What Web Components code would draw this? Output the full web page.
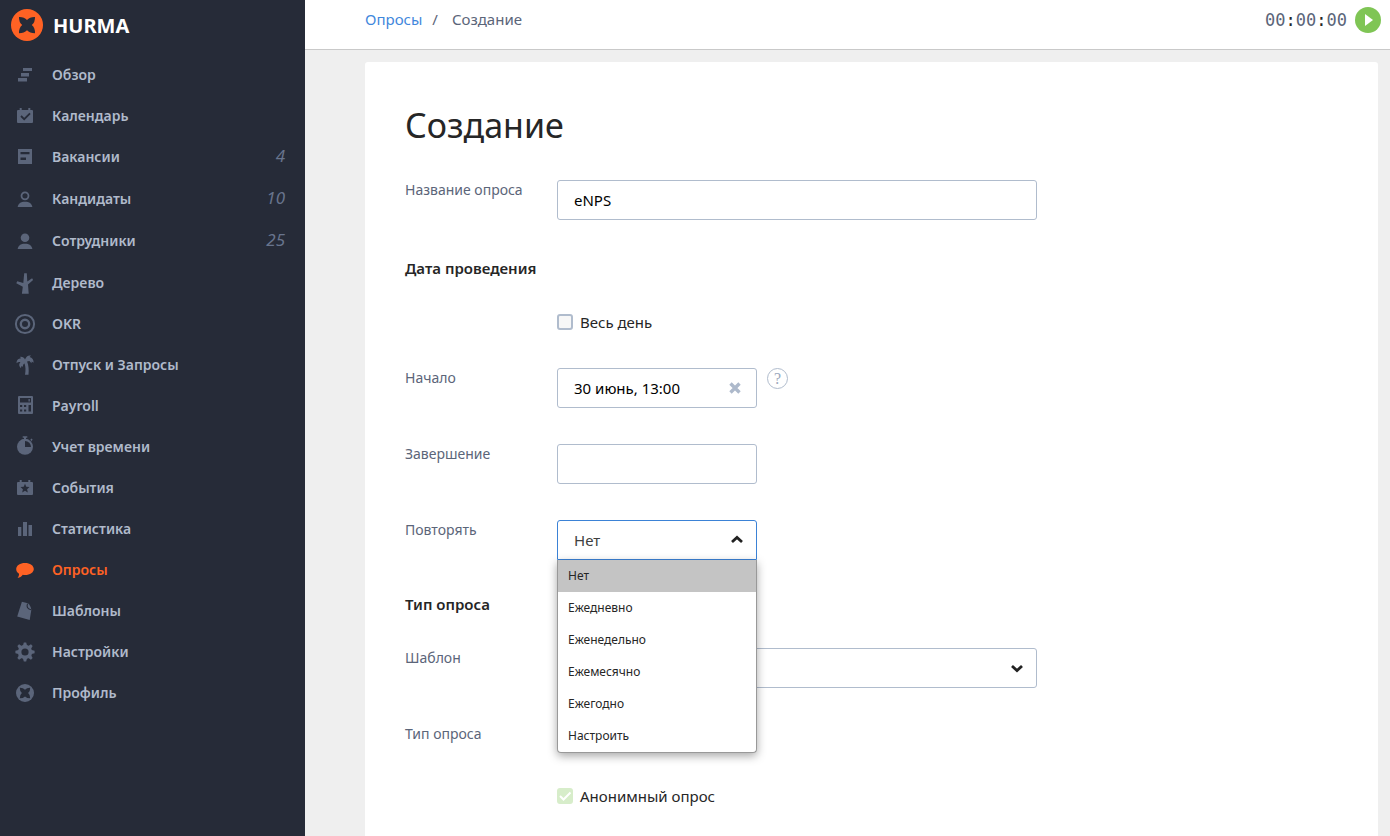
<!DOCTYPE html>
<html lang="ru">
<head>
<meta charset="utf-8">
<title>HURMA — Создание опроса</title>
<style>
  html, body { margin: 0; min-height: 100%; }
  body { background: #efefef; color: #262626; font-family: "Noto Sans", "Open Sans", sans-serif; font-size: 15px; overflow-x: hidden; }
</style>
</head>
<body>
<app-shell>
  <side-nav slot="nav">
    <nav-item icon="overview">Обзор</nav-item>
    <nav-item icon="calendar">Календарь</nav-item>
    <nav-item icon="vacancies" count="4">Вакансии</nav-item>
    <nav-item icon="candidates" count="10">Кандидаты</nav-item>
    <nav-item icon="employees" count="25">Сотрудники</nav-item>
    <nav-item icon="tree">Дерево</nav-item>
    <nav-item icon="okr">OKR</nav-item>
    <nav-item icon="palm">Отпуск и Запросы</nav-item>
    <nav-item icon="payroll">Payroll</nav-item>
    <nav-item icon="time">Учет времени</nav-item>
    <nav-item icon="events">События</nav-item>
    <nav-item icon="stats">Статистика</nav-item>
    <nav-item icon="polls" active>Опросы</nav-item>
    <nav-item icon="templates">Шаблоны</nav-item>
    <nav-item icon="settings">Настройки</nav-item>
    <nav-item icon="profile">Профиль</nav-item>
  </side-nav>
  <top-bar slot="bar"></top-bar>
  <survey-panel heading="Создание">
    <text-field class="first" label="Название опроса" value="eNPS"></text-field>
    <section-title>Дата проведения</section-title>
    <check-field>Весь день</check-field>
    <text-field label="Начало" value="30 июнь, 13:00" narrow clearable help></text-field>
    <text-field label="Завершение" narrow></text-field>
    <select-field label="Повторять" narrow open options="Нет,Ежедневно,Еженедельно,Ежемесячно,Ежегодно,Настроить"></select-field>
    <section-title>Тип опроса</section-title>
    <select-field label="Шаблон"></select-field>
    <plain-row>Тип опроса</plain-row>
    <check-field checked disabled>Анонимный опрос</check-field>
  </survey-panel>
</app-shell>

<script>
const define = (name, render) => customElements.define(name, class extends HTMLElement {
  constructor() { super(); this.attachShadow({ mode: 'open' }); }
  connectedCallback() { this.shadowRoot.innerHTML = render(this); }
});

const MARK = 'M8 8Q13.200 7.800 16 11Q18.800 7.800 24 8Q24.200 13.200 20.800 16Q24.200 18.800 24 24.200Q18.800 24.200 16 21.200Q13.200 24.200 8 24.200Q7.800 18.800 11.200 16Q7.800 13.200 8 8Z';
const BG = '#262b38';
const ICONS = {
  overview: '<path d="M10 5h9v3h-9zM8 10h8v3.5H8zM5 15h9v3.5H5z"/>',
  calendar: `<path d="M6.7 4h2v2h6.6V4h2v2H19a1 1 0 0 1 1 1v11a1 1 0 0 1-1 1H5a1 1 0 0 1-1-1V7a1 1 0 0 1 1-1h1.7z"/><path d="M8 12l3.2 3.2L17 9.4" fill="none" stroke="${BG}" stroke-width="1.8"/>`,
  vacancies: `<path d="M5 5h14v15H5z"/><path d="M7.5 8h9v2.3h-9zM7.5 13.6H13V16H7.5z" fill="${BG}"/>`,
  candidates: '<circle cx="12" cy="9.8" r="3.5" fill="none" stroke="currentColor" stroke-width="1.8"/><path d="M4.7 21c.4-3.4 3-5.3 7.3-5.3s6.9 1.900 7.3 5.3z"/>',
  employees: '<circle cx="12" cy="9.8" r="4.3"/><path d="M4.7 21c.4-3.4 3-5.3 7.3-5.3s6.9 1.900 7.3 5.3z"/>',
  tree: '<path d="M11.2 2.3h2.600l.5 8.3 4.800-3.400 1 1.700-5.100 4.700.7 9.100H8.900l.9-7-6.500-3.400.9-2.100 6.100 1.900z"/>',
  okr: '<g fill="none" stroke="currentColor"><circle cx="12" cy="12" r="9.1" stroke-width="2"/><circle cx="12" cy="12" r="4.2" stroke-width="2.4"/></g>',
  palm: '<path d="M12 6.500C13 3.500 15.500 1.800 18 2.600L16.600 4c2.600.4 4.200 2.800 4 5.800l-1.900-1.400-.2 1.800-2.100-2.300c-1 .1-1.700.3-2.300.6 1.600 3.700 1.900 8.300 1.400 13.200h-3.500c.8-4.500.7-8-.5-11.300-1.200.7-1.700 1.800-1.500 3.400l-1.500-.8-.6 2.200C5.600 12.800 5.800 10.900 7.400 9.200 5.800 8.800 4.800 9.200 3.600 10.300 3.500 6.900 5.600 5.600 7.800 5.600L7.200 3.800C9.300 3.500 11.200 4.500 12 6.500z"/>',
  payroll: `<path d="M6 2h13a1 1 0 0 1 1 1v16a1 1 0 0 1-1 1H6a1 1 0 0 1-1-1V3a1 1 0 0 1 1-1z"/><path d="M7 4h11v4.600H7zM7 11h2.200v2H7zM11 11h2.200v2H11zM7 15.600h2.200v2H7zM11 15.600h2.200v2H11zM15.500 11H18v6.600h-2.500z" fill="${BG}"/><path d="M15.500 5h1.300v2.600h-1.300z"/>`,
  time: `<circle cx="12" cy="11.8" r="8"/><path d="M9.700 1.200h4.600v1.600H13V5h-2V2.800H9.700zM17.400 4.600l1.100-1.100 1.200 1.200-1.600 1.600z"/><path d="M12 6v6h6a6 6 0 0 0-6-6z" fill="${BG}"/>`,
  events: `<path d="M6.700 4h2v2h6.600V4h2v2H19a1 1 0 0 1 1 1v11a1 1 0 0 1-1 1H5a1 1 0 0 1-1-1V7a1 1 0 0 1 1-1h1.700z"/><path d="M12 7.800l1.300 3 3.200.3-2.400 2.200.7 3.200-2.800-1.700-2.800 1.700.7-3.200-2.400-2.200 3.200-.3z" fill="${BG}"/>`,
  stats: '<path d="M5 10h3.300v9H5zM10 5h4v14h-4zM15.500 8H19v11h-3.500z"/>',
  polls: '<path d="M12 5c5 0 8.800 2.600 8.800 6s-3.800 6-8.800 6c-.8 0-1.500 0-2.200-.2C8.500 18.600 6.800 19.700 4.600 20c1-1.200 1.500-2.500 1.400-4.200-1.800-1.200-2.800-2.900-2.800-4.800C3.200 7.600 7 5 12 5z"/>',
  templates: `<path d="M8.900 2.700l6 1.600c1.900 1.600 3.200 4 3.400 6.700L16.700 21 4.200 17.600z"/><path d="M14.500 4.600c-1 3-.3 5.200 3.500 6.200" fill="none" stroke="${BG}" stroke-width="1.1"/>`,
  settings: `<g><circle cx="12" cy="12" r="7.200"/>${[0, 45, 90, 135].map(a => `<path d="M10.800 2.400h2.400l.8 3v13.200l-.8 3h-2.400l-.8-3V5.400z" transform="rotate(${a} 12 12)"/>`).join('')}<circle cx="12" cy="12" r="3.600" fill="${BG}"/></g>`,
  profile: `<circle cx="12" cy="12" r="9"/><g transform="translate(1.6 1.600) scale(.65)"><path d="${MARK}" fill="${BG}"/></g>`
};

define('app-shell', () => `
  <style>
    :host { display: grid; grid-template-columns: 305px minmax(0, 1fr); min-height: 100vh; }
    .content { display: flex; flex-direction: column; min-width: 0; }
    main { flex: 1; display: flex; flex-direction: column; padding: 12px 12px 0 60px; }
  </style>
  <slot name="nav"></slot>
  <div class="content"><slot name="bar"></slot><main><slot></slot></main></div>`);

define('side-nav', () => `
  <style>
    :host { display: block; background: ${BG}; }
    .brand { display: flex; align-items: center; gap: 10px; height: 50px; padding-left: 11px; margin-bottom: 4px; color: #fff; text-decoration: none; font-size: 20px; font-weight: 700; }
    svg { display: block; }
    nav { display: flex; flex-direction: column; }
  </style>
  <a class="brand" href="#"><svg width="32" height="32" viewBox="0 0 32 32" aria-hidden="true"><circle cx="16" cy="16" r="16" fill="#ff6224"/><path d="${MARK}" fill="${BG}"/></svg><span>HURMA</span></a>
  <nav><slot></slot></nav>`);

define('nav-item', el => `
  <style>
    :host { display: block; }
    a { display: flex; align-items: center; gap: 15px; box-sizing: border-box; height: 41px; padding: 0 20px 0 13px; color: #b0bacb; text-decoration: none; font-size: 14px; font-weight: 600; }
    svg { display: block; flex: none; fill: currentColor; color: #5b657a; }
    :host([count]) a { height: 42px; padding-bottom: 2px; }
    :host([active]) a, :host([active]) svg { color: #ff6224; }
    .name { flex: 1; }
    i { color: #68748d; font-size: 17px; line-height: 24px; font-weight: 400; }
  </style>
  <a href="#"><svg width="24" height="24" viewBox="0 0 24 24" aria-hidden="true">${ICONS[el.getAttribute('icon')]}</svg><span class="name"><slot></slot></span>${el.hasAttribute('count') ? `<i>${el.getAttribute('count')}</i>` : ''}</a>`);

define('top-bar', () => `
  <style>
    :host { display: flex; align-items: center; justify-content: space-between; box-sizing: border-box; height: 50px; padding: 0 9px 10px 60px; background: #fff; border-bottom: 1px solid #c9c9c9; color: #5b6579; }
    .crumbs { display: flex; font-size: 15px; line-height: 20px; padding-bottom: 2px; }
    .crumbs a { color: #3f87dc; text-decoration: none; }
    .sep { padding: 0 14px 0 10px; }
    .timer { display: flex; align-items: center; gap: 8px; font: 17px "DejaVu Sans Mono", monospace; }
    b { font-weight: 400; color: #262626; }
    button { display: block; width: 26px; height: 26px; padding: 0; border: 0; border-radius: 50%; background: #7fc555; }
    svg { display: block; }
  </style>
  <div class="crumbs"><a href="#">Опросы</a><span class="sep">/</span><span>Создание</span></div>
  <div class="timer"><span>00<b>:</b>00<b>:</b>00</span><button type="button" aria-label="Запустить таймер"><svg width="26" height="26" viewBox="0 0 26 26"><path d="M10 7l8 6-8 6z" fill="#fff"/></svg></button></div>`);

define('survey-panel', el => `
  <style>
    :host { flex: 1; display: block; padding: 40px 40px 28px; background: #fff; border-radius: 3px 3px 0 0; }
    h1 { margin: 0 0 32px; font-size: 34px; line-height: 46px; font-weight: 400; }
    form { display: flex; flex-direction: column; gap: 36px; }
    ::slotted(.first) { padding-bottom: 4px; }
  </style>
  <h1>${el.getAttribute('heading')}</h1>
  <form><slot></slot></form>`);

define('section-title', () => `
  <style>
    :host { display: block; }
    h2 { margin: 0; font-size: 15px; line-height: 16px; font-weight: 600; }
  </style>
  <h2><slot></slot></h2>`);

const ROW = `
    :host { display: grid; grid-template-columns: 152px minmax(0, 480px); align-items: start; }
    .label { color: #5b6579; font-size: 14px; line-height: 20px; }`;
const BOX = `
    .line { display: flex; align-items: flex-start; gap: 10px; }
    .box { position: relative; flex: 0 1 480px; }
    :host([narrow]) .box { flex-basis: 200px; }
    input, select { display: block; box-sizing: border-box; width: 100%; height: 40px; margin: 0; padding: 0 16px; border: 1px solid #b0bccd; border-radius: 3px; background: #fff; color: #000; font: 15px "Noto Sans", "Open Sans", sans-serif; outline: 0; }`;

define('text-field', el => `
  <style>${ROW}${BOX}
    .clear { position: absolute; top: 10px; right: 12px; width: 20px; height: 20px; padding: 0; border: 0; background: none; }
    .help { flex: none; width: 21px; height: 21px; padding: 0; border: 1px solid #b0bccd; border-radius: 50%; background: none; color: #9ca8bd; font: 16px/19px "Liberation Serif", serif; }
    svg { display: block; }
  </style>
  <label class="label" for="f">${el.getAttribute('label')}</label>
  <div class="line"><div class="box"><input id="f" type="text" value="${el.getAttribute('value') || ''}">${el.hasAttribute('clearable') ? '<button class="clear" type="button" aria-label="Очистить"><svg width="20" height="20" viewBox="0 0 20 20"><path d="M5.500 5.500l9 9m0-9l-9 9" stroke="#adb9cb" stroke-width="3.400"/></svg></button>' : ''}</div>${el.hasAttribute('help') ? '<button class="help" type="button">?</button>' : ''}</div>`);

define('select-field', el => {
  const options = (el.getAttribute('options') || '').split(',');
  const open = el.hasAttribute('open');
  return `
  <style>${ROW}${BOX}
    select { appearance: none; color: #404040; }
    :host([open]) select { border-color: #3b82d6; border-radius: 3px 3px 0 0; }
    svg { position: absolute; top: 10px; right: 10px; pointer-events: none; }
    ul { position: absolute; z-index: 2; top: 40px; left: 0; right: 0; box-sizing: border-box; margin: 0; padding: 0; list-style: none; background: #fff; border: 1px solid #999; border-top: 0; border-radius: 0 0 4px 4px; box-shadow: 0 3px 10px rgba(0, 0, 0, .35); overflow: hidden; }
    li { padding: 0 10px; font-size: 12px; line-height: 32px; }
    li[aria-selected="true"] { background: #c4c4c4; }
  </style>
  <label class="label" for="f">${el.getAttribute('label')}</label>
  <div class="line"><div class="box"><select id="f">${options.map(o => `<option>${o}</option>`).join('')}</select>
    <svg width="20" height="20" viewBox="0 0 20 20" aria-hidden="true"><path d="${open ? 'M5 12l5-4.500 5 4.500' : 'M5 8l5 4.500L15 8'}" fill="none" stroke="#222" stroke-width="2.800"/></svg>
    ${open ? `<ul role="listbox">${options.map((o, i) => `<li role="option" aria-selected="${i === 0}">${o}</li>`).join('')}</ul>` : ''}</div></div>`;
});

define('plain-row', () => `
  <style>${ROW}
    :host { min-height: 26px; }
  </style>
  <span class="label"><slot></slot></span>`);

define('check-field', el => `
  <style>
    :host { display: block; padding-left: 152px; }
    label { display: flex; align-items: center; gap: 7px; height: 20px; font-size: 15px; }
    .tick { display: grid; width: 16px; height: 16px; }
    input { grid-area: 1 / 1; appearance: none; box-sizing: border-box; width: 16px; height: 16px; margin: 0; border: 2px solid #b0bccd; border-radius: 3px; background: #f7f7f7; }
    input:checked { border: 0; background: #d7edca; }
    svg { grid-area: 1 / 1; z-index: 1; display: none; pointer-events: none; }
    input:checked + svg { display: block; }
  </style>
  <label><span class="tick"><input type="checkbox" ${el.hasAttribute('checked') ? 'checked' : ''} ${el.hasAttribute('disabled') ? 'disabled' : ''}><svg width="16" height="16" viewBox="0 0 16 16"><path d="M3 8l3.500 3.500L13.500 4.500" fill="none" stroke="#fff" stroke-width="2"/></svg></span><span><slot></slot></span></label>`);
</script>
</body>
</html>
